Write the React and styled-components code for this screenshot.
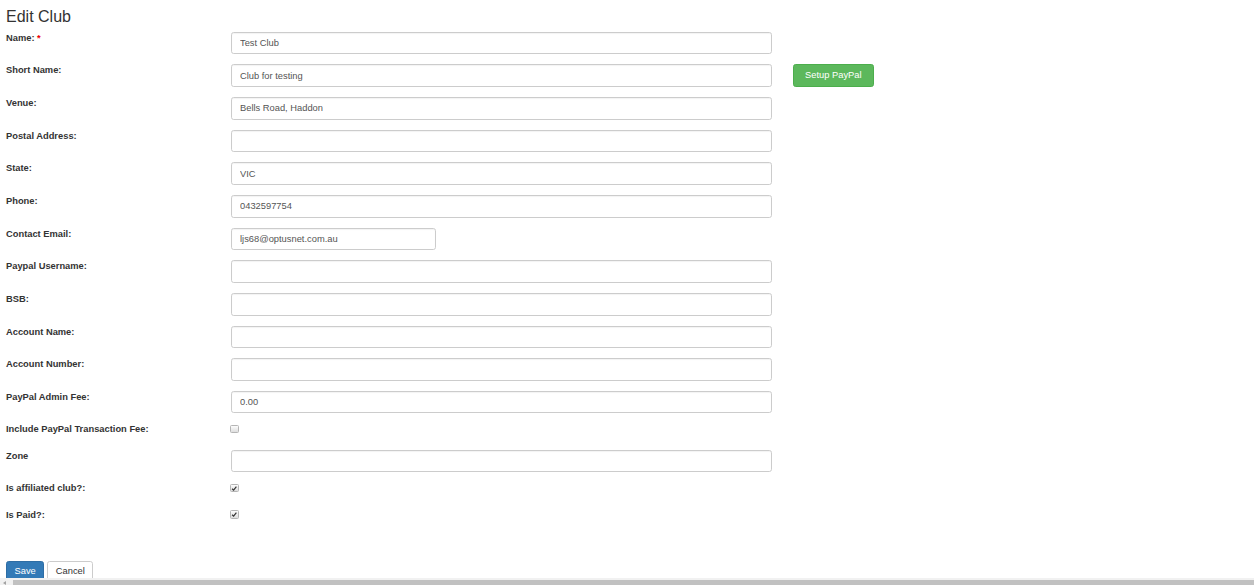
import React from "react";
import styled, { createGlobalStyle } from "styled-components";

const Global = createGlobalStyle`
  html, body { margin: 0; padding: 0; background: #fff; }
  body {
    font-family: "Liberation Sans", Arial, sans-serif;
    color: #333;
    font-size: 9.33px;
    overflow: hidden;
  }
  * { box-sizing: border-box; }
`;

const Page = styled.div`
  padding: 7.5px 6px 0 6px;
  width: 1254px;
  height: 585px;
`;

const Title = styled.h3`
  margin: 0 0 6.5px 0;
  font-size: 16px;
  line-height: 17.6px;
  font-weight: 400;
  color: #333;
`;

const Form = styled.form`
  display: flex;
  flex-direction: column;
`;

const Row = styled.div`
  display: flex;
  align-items: flex-start;
  height: ${(p) => (p.$check ? "16px" : "22.67px")};
  margin-bottom: ${(p) => (p.$check ? "10.33px" : "10px")};
`;

const Label = styled.label`
  width: 225px;
  flex: none;
  font-weight: 700;
  font-size: 9.33px;
  line-height: 12px;
  color: #333;
`;

const Req = styled.span`
  color: #e00;
`;

const Input = styled.input`
  width: ${(p) => p.$w || 541}px;
  height: 22.67px;
  padding: 0 8px;
  border: 1px solid #ccc;
  border-radius: 2.67px;
  font-family: "Liberation Sans", Arial, sans-serif;
  font-size: 9.33px;
  color: #555;
  background: #fff;
  box-shadow: inset 0 1px 1px rgba(0, 0, 0, 0.05);
  outline: none;
`;

const Check = styled.span`
  display: inline-flex;
  align-items: center;
  justify-content: center;
  width: 8.5px;
  height: 8.5px;
  margin: 1.5px 0 0 -1px;
  border: 1px solid #b5b5b5;
  border-radius: 1.5px;
  background: linear-gradient(#fcfcfc, #dedede);
`;

const Btn = styled.button`
  height: 22.67px;
  padding: 0 ${(p) => p.$px || 7.5}px;
  border: 1px solid;
  border-radius: 2.67px;
  font-family: "Liberation Sans", Arial, sans-serif;
  font-size: 9.33px;
  line-height: 1;
  cursor: pointer;
  background: ${(p) => p.$bg};
  border-color: ${(p) => p.$border};
  color: ${(p) => p.$color};
`;

const SideBtn = styled(Btn)`
  margin-left: 21px;
`;

const Actions = styled.div`
  display: flex;
  gap: 3px;
  margin-top: 25.7px;
`;

const ScrollBar = styled.div`
  position: fixed;
  left: 0;
  right: 0;
  bottom: 0;
  height: 7px;
  background: #f1f1f1;
`;

const Thumb = styled.div`
  position: absolute;
  left: 13px;
  right: 0;
  top: 2px;
  bottom: 0;
  background: #c1c1c1;
`;

const Arrow = styled.div`
  position: absolute;
  left: 3px;
  top: 3px;
  width: 0;
  height: 0;
  border-top: 2px solid transparent;
  border-bottom: 2px solid transparent;
  border-right: 3px solid #a3a3a3;
`;

const CheckMark = () => (
  <svg width="7" height="7" viewBox="0 0 7 7">
    <path d="M1.2 3.8 L2.8 5.3 L5.8 1.5" fill="none" stroke="#333" strokeWidth="1.3" />
  </svg>
);

const fields = [
  { label: "Name:", req: true, value: "Test Club" },
  { label: "Short Name:", value: "Club for testing", paypal: true },
  { label: "Venue:", value: "Bells Road, Haddon" },
  { label: "Postal Address:", value: "" },
  { label: "State:", value: "VIC" },
  { label: "Phone:", value: "0432597754" },
  { label: "Contact Email:", value: "ljs68@optusnet.com.au", w: 205 },
  { label: "Paypal Username:", value: "" },
  { label: "BSB:", value: "" },
  { label: "Account Name:", value: "" },
  { label: "Account Number:", value: "" },
  { label: "PayPal Admin Fee:", value: "0.00" },
  { label: "Include PayPal Transaction Fee:", check: true, checked: false },
  { label: "Zone", value: "" },
  { label: "Is affiliated club?:", check: true, checked: true },
  { label: "Is Paid?:", check: true, checked: true },
];

export default function App() {
  return (
    <>
      <Global />
      <Page>
        <Title>Edit Club</Title>
        <Form onSubmit={(e) => e.preventDefault()}>
          {fields.map((f) => (
            <Row key={f.label} $check={f.check}>
              <Label>
                {f.label}
                {f.req && (
                  <>
                    {" "}
                    <Req>*</Req>
                  </>
                )}
              </Label>
              {f.check ? (
                <Check>{f.checked && <CheckMark />}</Check>
              ) : (
                <Input defaultValue={f.value} $w={f.w} />
              )}
              {f.paypal && (
                <SideBtn type="button" $bg="#5cb85c" $border="#4cae4c" $color="#fff" $px={11}>
                  Setup PayPal
                </SideBtn>
              )}
            </Row>
          ))}
          <Actions>
            <Btn type="submit" $bg="#337ab7" $border="#2e6da4" $color="#fff">
              Save
            </Btn>
            <Btn type="button" $bg="#fff" $border="#ccc" $color="#333">
              Cancel
            </Btn>
          </Actions>
        </Form>
      </Page>
      <ScrollBar>
        <Arrow />
        <Thumb />
      </ScrollBar>
    </>
  );
}
